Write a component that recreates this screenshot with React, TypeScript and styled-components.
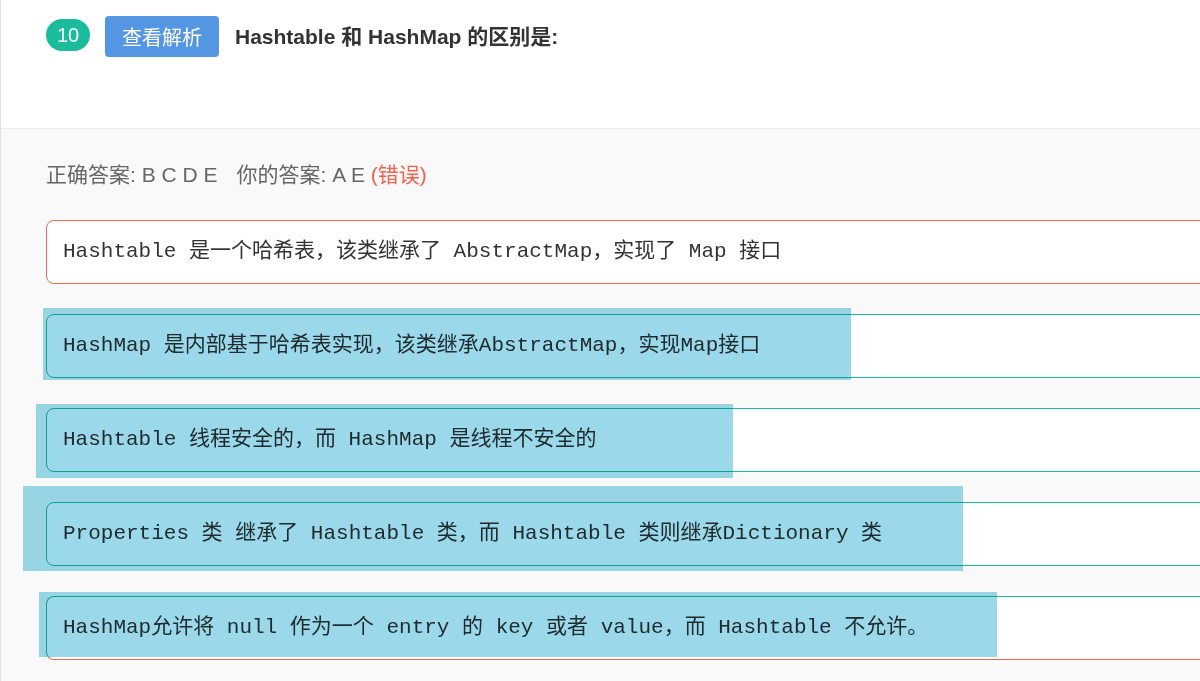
import styled, { createGlobalStyle } from "styled-components";

const GlobalStyle = createGlobalStyle`
  html, body {
    margin: 0;
    padding: 0;
    background: #f9f9f9;
    overflow: hidden;
  }
  body {
    font-family: "Liberation Sans", Arial, "Noto Sans CJK SC", sans-serif;
  }
`;

const Page = styled.div`
  position: relative;
  width: 1200px;
  height: 681px;
  border-left: 1px solid #e3e3e3;
  box-sizing: border-box;
  overflow: hidden;
`;

const Header = styled.header`
  display: flex;
  align-items: flex-start;
  gap: 15px;
  height: 129px;
  box-sizing: border-box;
  padding: 16px 0 0 45px;
  background: #fff;
  border-bottom: 1px solid #ececec;
`;

const Badge = styled.span`
  display: inline-flex;
  align-items: center;
  justify-content: center;
  width: 44px;
  height: 32px;
  margin-top: 3px;
  border-radius: 16px;
  background: #1abc9c;
  color: #fff;
  font-size: 20px;
`;

const ViewButton = styled.button`
  width: 114px;
  height: 41px;
  padding: 0;
  border: none;
  border-radius: 4px;
  background: #5596e2;
  color: #fff;
  font-family: "Liberation Sans", "Noto Sans CJK SC", sans-serif;
  font-size: 20px;
  cursor: pointer;
`;

const Title = styled.h2`
  margin: 0 0 0 1px;
  line-height: 41px;
  font-size: 21px;
  font-weight: 700;
  color: #333;
`;

const Body = styled.section`
  display: flex;
  flex-direction: column;
  padding: 31px 0 0 45px;
`;

const AnswerLine = styled.p`
  margin: 0 0 30px;
  line-height: 30px;
  font-size: 21px;
  color: #666;
`;

const Gap = styled.span`
  display: inline-block;
  width: 19px;
`;

const Wrong = styled.span`
  color: #f5614d;
`;

const Options = styled.div`
  display: flex;
  flex-direction: column;
  gap: 30px;
`;

type Tone = "wrong" | "right" | "mixed";

const borderFor = (tone: Tone) => {
  if (tone === "wrong") return "#f5664d";
  if (tone === "mixed") return "#1abc9c #1abc9c #f5664d #1abc9c";
  return "#1abc9c";
};

const Option = styled.div<{ $tone: Tone }>`
  display: flex;
  align-items: center;
  width: 1200px;
  height: 64px;
  box-sizing: border-box;
  padding: 0 16px 8px;
  border: 1px solid;
  border-color: ${(p) => borderFor(p.$tone)};
  border-radius: 8px;
  background: #fff;
  font-family: "Liberation Mono", "Courier New", "Noto Sans CJK SC", monospace;
  font-size: 21px;
  color: #333;
  white-space: pre;
`;

const Highlight = styled.div<{ $x: number; $y: number; $w: number; $h: number }>`
  position: absolute;
  left: ${(p) => p.$x - 1}px;
  top: ${(p) => p.$y}px;
  width: ${(p) => p.$w}px;
  height: ${(p) => p.$h}px;
  background: #9bd9ea;
  mix-blend-mode: multiply;
  pointer-events: none;
`;

const options: { text: string; tone: Tone }[] = [
  { text: "Hashtable 是一个哈希表，该类继承了 AbstractMap，实现了 Map 接口", tone: "wrong" },
  { text: "HashMap 是内部基于哈希表实现，该类继承AbstractMap，实现Map接口", tone: "right" },
  { text: "Hashtable 线程安全的，而 HashMap 是线程不安全的", tone: "right" },
  { text: "Properties 类 继承了 Hashtable 类，而 Hashtable 类则继承Dictionary 类", tone: "right" },
  { text: "HashMap允许将 null 作为一个 entry 的 key 或者 value，而 Hashtable 不允许。", tone: "mixed" },
];

const highlights = [
  { x: 43, y: 308, w: 808, h: 72 },
  { x: 36, y: 404, w: 697, h: 74 },
  { x: 23, y: 486, w: 940, h: 85 },
  { x: 39, y: 592, w: 958, h: 65 },
];

export default function App() {
  return (
    <>
      <GlobalStyle />
      <Page>
        <Header>
          <Badge>10</Badge>
          <ViewButton>查看解析</ViewButton>
          <Title>Hashtable 和 HashMap 的区别是:</Title>
        </Header>
        <Body>
          <AnswerLine>
            正确答案: B C D E<Gap />你的答案: A E <Wrong>(错误)</Wrong>
          </AnswerLine>
          <Options>
            {options.map((o) => (
              <Option key={o.text} $tone={o.tone}>
                {o.text}
              </Option>
            ))}
          </Options>
        </Body>
        {highlights.map((h, i) => (
          <Highlight key={i} $x={h.x} $y={h.y} $w={h.w} $h={h.h} />
        ))}
      </Page>
    </>
  );
}
